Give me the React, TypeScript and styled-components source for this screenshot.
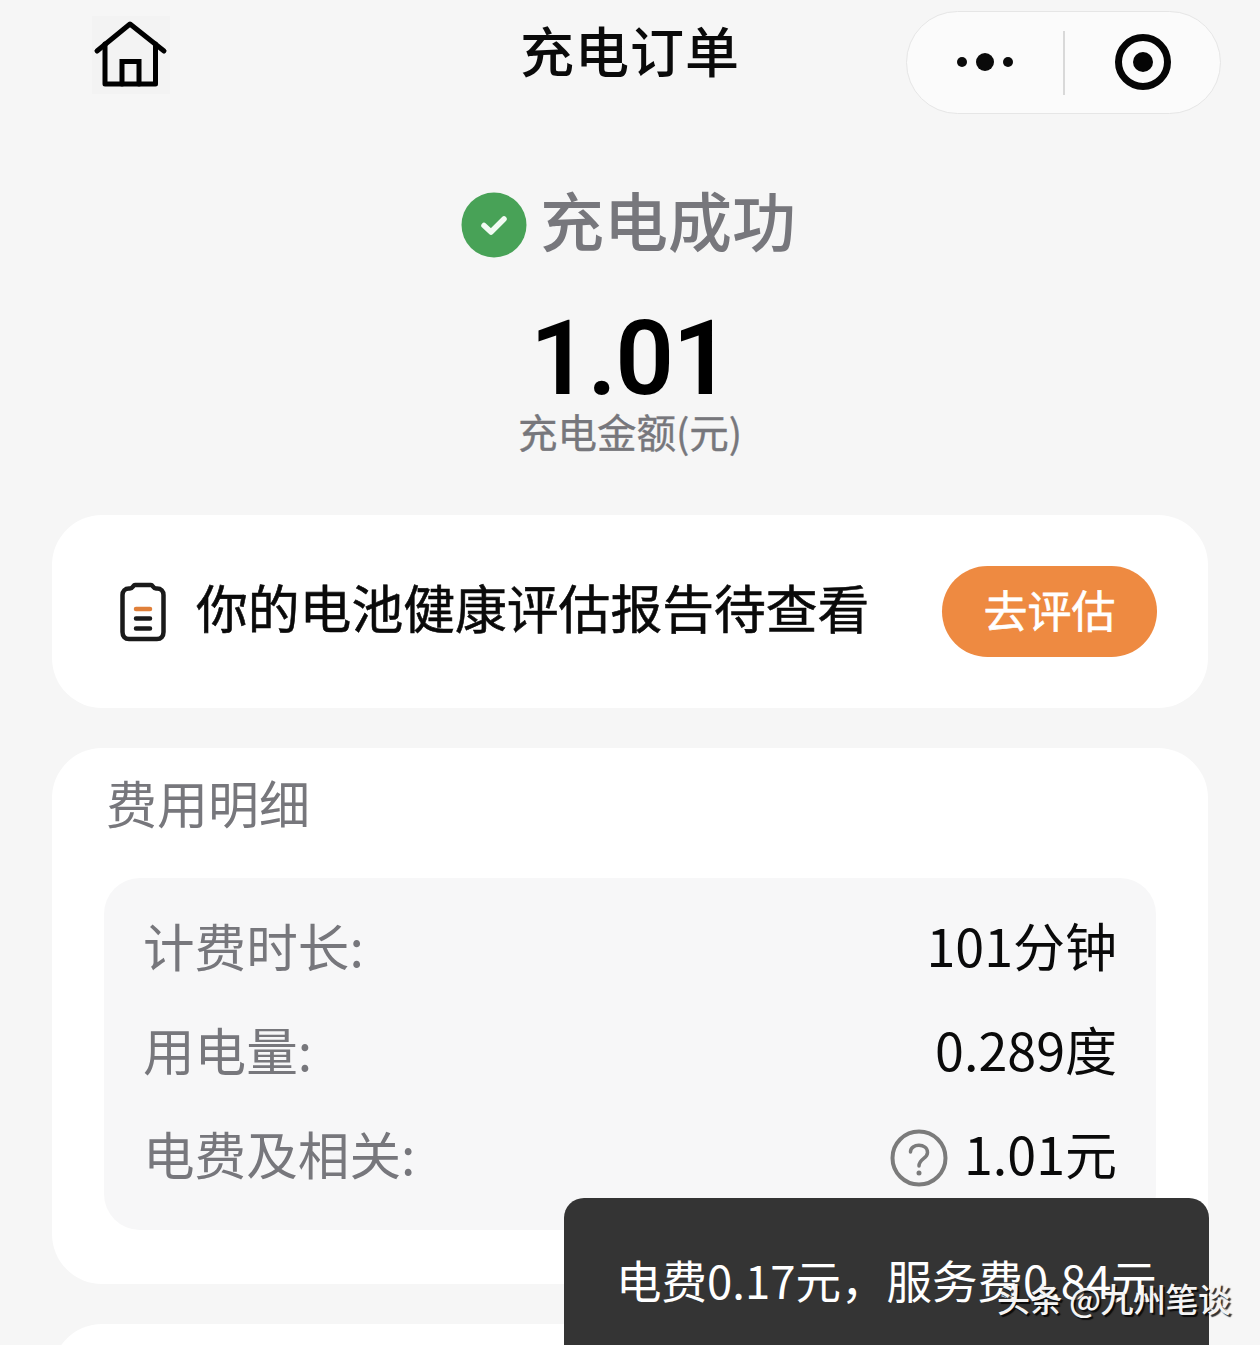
import styled, { createGlobalStyle } from "styled-components";

const GlobalStyle = createGlobalStyle`
  html, body {
    margin: 0;
    padding: 0;
    background: #f6f6f6;
  }
  * {
    box-sizing: border-box;
  }
`;

const fee = [
  { label: "计费时长:", value: "101分钟" },
  { label: "用电量:", value: "0.289度" },
  { label: "电费及相关:", value: "1.01元", help: true },
];

function HomeIcon() {
  return (
    <svg width="78" height="78" viewBox="0 0 78 78" fill="none" stroke="#000" strokeWidth="5" strokeLinecap="round" strokeLinejoin="round">
      <path d="M5 35 L38 8 L72 35" />
      <path d="M13 28 V68 H63.500 V28" />
      <path d="M30 68 V45.500 H47 V68" strokeLinejoin="miter" />
    </svg>
  );
}

function BatteryIcon() {
  return (
    <svg width="46" height="60" viewBox="0 0 46 60" fill="none" strokeLinecap="round">
      <path
        d="M15 3 H31 C33 3 33 6.500 36 6.500 H37 C41 6.500 43.500 9 43.500 13 V50 C43.500 54.500 41 57 37 57 H9 C5 57 2.500 54.500 2.500 50 V13 C2.500 9 5 6.500 9 6.500 H10 C13 6.500 13 3 15 3 Z"
        stroke="#1a1a1a"
        strokeWidth="4.500"
        fill="#fff"
      />
      <path d="M16 27 H30" stroke="#e0803a" strokeWidth="4.500" />
      <path d="M16 36.500 H30 M16 46.500 H30" stroke="#1a1a1a" strokeWidth="4.500" />
    </svg>
  );
}

function HelpIcon() {
  return (
    <HelpMark width="58" height="58" viewBox="0 0 58 58" fill="none" stroke="#7b7b7b" strokeLinecap="round">
      <circle cx="29" cy="29" r="26.500" strokeWidth="4" />
      <path d="M20.500 23 C20.500 14 37.500 14 37.500 23.500 C37.500 30 29 29.500 29 37" strokeWidth="3.500" />
      <circle cx="29" cy="44" r="1.500" strokeWidth="2" fill="#7b7b7b" />
    </HelpMark>
  );
}

export default function App() {
  return (
    <>
      <GlobalStyle />
      <Page>
        <NavBar>
          <HomeButton>
            <HomeIcon />
          </HomeButton>
          <NavTitle>充电订单</NavTitle>
          <Capsule>
            <Dots>
              <Dot />
              <Dot $big />
              <Dot />
            </Dots>
            <CapsuleLine />
            <Target>
              <TargetCore />
            </Target>
          </Capsule>
        </NavBar>

        <Status>
          <StatusRow>
            <svg width="66" height="66" viewBox="0 0 66 66">
              <circle cx="33" cy="33" r="32.500" fill="#48a257" />
              <path d="M23 33.500 L30 40 L43 27" fill="none" stroke="#f2fbf3" strokeWidth="5.500" strokeLinecap="round" strokeLinejoin="round" />
            </svg>
            <StatusText>充电成功</StatusText>
          </StatusRow>
          <Amount>1.01</Amount>
          <AmountLabel>充电金额(元)</AmountLabel>
        </Status>

        <Cards>
          <ReportCard>
            <BatteryIcon />
            <ReportText>你的电池健康评估报告待查看</ReportText>
            <RateButton>去评估</RateButton>
          </ReportCard>

          <DetailCard>
            <DetailTitle>费用明细</DetailTitle>
            <DetailPanel>
              {fee.map((row) => (
                <DetailRow key={row.label}>
                  <RowLabel>{row.label}</RowLabel>
                  <RowValue>
                    {row.help && <HelpIcon />}
                    {row.value}
                  </RowValue>
                </DetailRow>
              ))}
            </DetailPanel>
          </DetailCard>

          <NextCard />
        </Cards>

        <Toast>电费0.17元，服务费0.84元</Toast>
        <Watermark>头条 @九州笔谈</Watermark>
      </Page>
    </>
  );
}

const Page = styled.div`
  position: relative;
  width: 1260px;
  height: 1345px;
  overflow: hidden;
  background: #f6f6f6;
  font-family: "Noto Sans CJK SC", "Noto Sans", sans-serif;
`;

const NavBar = styled.header`
  display: grid;
  grid-template-columns: 428px auto 1fr;
  align-items: start;
  height: 180px;
  padding: 11px 39px 0 92px;
`;

const HomeButton = styled.div`
  display: flex;
  align-items: center;
  justify-content: center;
  width: 78px;
  height: 78px;
  margin-top: 5px;
  background: #f3f3f3;
`;

const NavTitle = styled.h1`
  margin: -2px 0 0;
  font-size: 54px;
  line-height: 82px;
  font-weight: 500;
  letter-spacing: 1px;
  color: #0a0a0a;
`;

const Capsule = styled.div`
  display: flex;
  align-items: center;
  justify-self: end;
  width: 315px;
  height: 103px;
  border: 1px solid #e6e6e6;
  border-radius: 52px;
  background: #fbfbfb;
`;

const Dots = styled.div`
  display: flex;
  align-items: center;
  justify-content: center;
  gap: 9px;
  width: 156px;
  margin-top: -2px;
`;

const Dot = styled.span<{ $big?: boolean }>`
  width: ${(p) => (p.$big ? 18 : 10)}px;
  height: ${(p) => (p.$big ? 18 : 10)}px;
  border-radius: 50%;
  background: #0a0a0a;
`;

const CapsuleLine = styled.span`
  width: 2px;
  height: 64px;
  background: #d9d9d9;
`;

const Target = styled.div`
  display: flex;
  align-items: center;
  justify-content: center;
  width: 56px;
  height: 56px;
  margin: -2px 0 0 50px;
  border: 7px solid #050505;
  border-radius: 50%;
`;

const TargetCore = styled.span`
  width: 20px;
  height: 20px;
  border-radius: 50%;
  background: #050505;
`;

const Status = styled.section`
  display: flex;
  flex-direction: column;
  align-items: center;
  height: 335px;
`;

const StatusRow = styled.div`
  display: flex;
  align-items: center;
  gap: 13px;
  height: 90px;
  margin-left: -3px;
`;

const StatusText = styled.div`
  margin-top: -14px;
  font-size: 64px;
  line-height: 90px;
  font-weight: 500;
  color: #77777c;
`;

const Amount = styled.div`
  margin-top: 44px;
  font-family: "Roboto", sans-serif;
  font-size: 103px;
  line-height: 90px;
  font-weight: 600;
  letter-spacing: -1.500px;
  color: #000;
`;

const AmountLabel = styled.div`
  margin-top: 1px;
  font-size: 39.500px;
  line-height: 52px;
  -webkit-text-stroke: 0.4px #77777c;
  color: #77777c;
`;

const Cards = styled.main`
  display: flex;
  flex-direction: column;
  gap: 40px;
  padding: 0 52px;
`;

const Card = styled.section`
  background: #fff;
  border-radius: 50px;
`;

const ReportCard = styled(Card)`
  display: flex;
  align-items: center;
  height: 193px;
  padding: 0 51px 0 68px;
`;

const ReportText = styled.div`
  flex: 1;
  margin: -10px 0 0 30px;
  font-size: 51.800px;
  line-height: 72px;
  -webkit-text-stroke: 0.6px #0a0a0a;
  color: #0a0a0a;
`;

const RateButton = styled.div`
  display: flex;
  align-items: center;
  justify-content: center;
  width: 215px;
  height: 91px;
  padding-bottom: 6px;
  border-radius: 46px;
  background: #ee8a41;
  color: #fff;
  font-size: 44px;
  -webkit-text-stroke: 0.6px #fff;
`;

const DetailCard = styled(Card)`
  height: 536px;
  padding: 18px 52px 0;
`;

const DetailTitle = styled.h2`
  margin: 0 0 40px;
  padding-left: 2px;
  font-size: 51px;
  line-height: 72px;
  font-weight: 400;
  color: #77777c;
`;

const DetailPanel = styled.div`
  display: flex;
  flex-direction: column;
  gap: 32px;
  height: 352px;
  padding: 30px 39px 0 39px;
  border-radius: 36px;
  background: #f7f7f8;
`;

const DetailRow = styled.div`
  display: flex;
  align-items: center;
  justify-content: space-between;
  height: 72px;
`;

const RowLabel = styled.span`
  font-size: 51.600px;
  color: #77777c;
`;

const RowValue = styled.span`
  display: flex;
  align-items: center;
  gap: 16px;
  font-size: 52px;
  color: #0a0a0a;
`;

const HelpMark = styled.svg`
  margin-top: 12px;
`;

const NextCard = styled(Card)`
  height: 120px;
`;

const Toast = styled.div`
  position: absolute;
  left: 564px;
  top: 1198px;
  width: 645px;
  height: 170px;
  padding: 47px 0 0 52px;
  border-radius: 20px;
  background: #343434;
  color: #fff;
  font-size: 45.500px;
  line-height: 68px;
  white-space: nowrap;
`;

const Watermark = styled.div`
  position: absolute;
  left: 997px;
  top: 1274px;
  font-size: 33px;
  line-height: 48px;
  font-weight: 500;
  letter-spacing: -0.500px;
  color: #f4f4f4;
  text-shadow: 2px 2px 1px rgba(0, 0, 0, 0.8);
  white-space: nowrap;
`;
